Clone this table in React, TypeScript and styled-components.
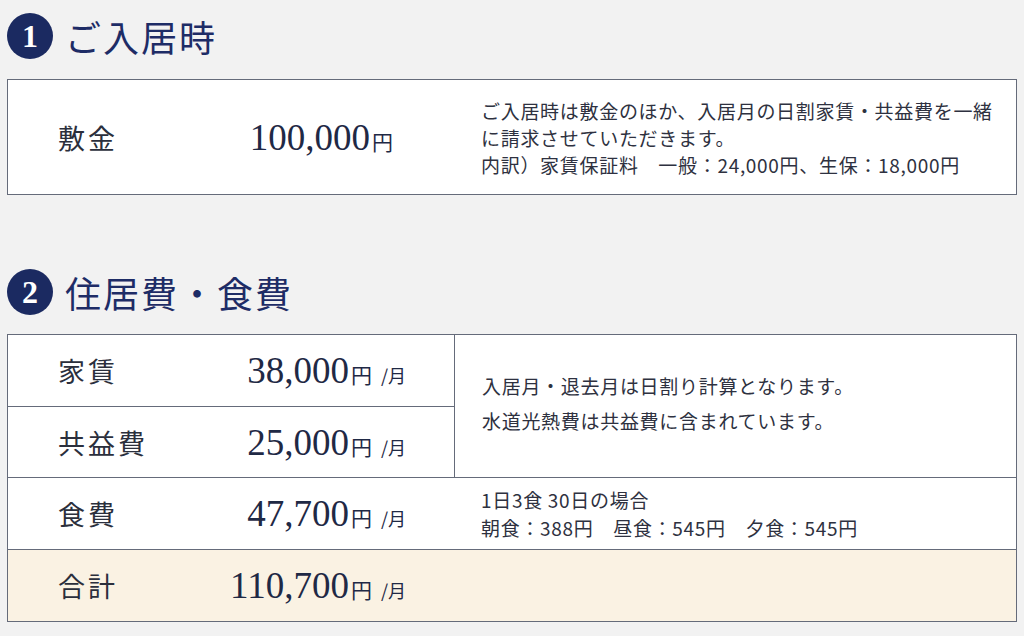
import React from 'react';
import styled, {createGlobalStyle} from 'styled-components';

const GlobalStyle = createGlobalStyle`
    html, body {
        margin: 0;
        padding: 0;
        background: #f2f2f2;
    }

    body {
        font-family: 'Noto Sans CJK JP', 'Noto Sans', sans-serif;
        color: #2e3140;
    }
`;

const Page = styled.div`
    padding: 13px 7px 0 7px;
    display: flex;
    flex-direction: column;
`;

const Heading = styled.h2<{$top: number}>`
    margin: ${({$top}) => $top}px 0 0 0;
    display: flex;
    align-items: center;
    gap: 12px;
    height: 46px;
    font-size: 36px;
    font-weight: 400;
    letter-spacing: 2px;
    color: #1e2c66;
    line-height: 1;
`;

const Badge = styled.span`
    width: 46px;
    height: 46px;
    border-radius: 50%;
    background: #1b2a61;
    color: #ffffff;
    display: flex;
    align-items: center;
    justify-content: center;
    font-family: 'Liberation Serif', serif;
    font-weight: 700;
    font-size: 32px;
    letter-spacing: 0;
    flex-shrink: 0;
`;

const Table = styled.div<{$top: number}>`
    margin-top: ${({$top}) => $top}px;
    border: 1px solid #656b7a;
    background: #ffffff;
    display: flex;
    flex-direction: column;
`;

const Row = styled.div<{$total?: boolean; $divided?: boolean; $height?: number}>`
    display: flex;
    align-items: stretch;
    min-height: ${({$height}) => $height ?? 71}px;
    background: ${({$total}) => ($total ? '#faf2e3' : '#ffffff')};
    border-top: ${({$divided}) => ($divided ? '1px solid #656b7a' : 'none')};
`;

const LeftStack = styled.div`
    width: 446px;
    flex-shrink: 0;
    display: flex;
    flex-direction: column;
    border-right: 1px solid #656b7a;

    & > div + div {
        border-top: 1px solid #656b7a;
    }
`;

const ItemCell = styled.div<{$padRight?: number}>`
    width: 446px;
    box-sizing: border-box;
    flex-shrink: 0;
    min-height: 71px;
    display: flex;
    align-items: center;
    justify-content: space-between;
    padding: 0 ${({$padRight}) => $padRight ?? 48}px 0 50px;
`;

const Label = styled.span`
    font-size: 27px;
    letter-spacing: 3px;
    color: #2b2f3c;
`;

const Amount = styled.span`
    display: flex;
    align-items: baseline;
    color: #1f2945;
`;

const Num = styled.span`
    font-family: 'Liberation Serif', serif;
    font-size: 37px;
    letter-spacing: 0;
`;

const Yen = styled.span`
    font-size: 21px;
    margin-left: 2px;
`;

const Per = styled.span`
    font-size: 18px;
    margin-left: 9px;
`;

const Desc = styled.div<{$lh?: number; $pad?: number; $shift?: number}>`
    flex: 1;
    display: flex;
    flex-direction: column;
    justify-content: center;
    padding: ${({$pad}) => $pad ?? 0}px 20px ${({$pad, $shift}) => ($pad ?? 0) + ($shift ?? 0)}px 27px;
    font-size: 19px;
    letter-spacing: 0.7px;
    line-height: ${({$lh}) => $lh ?? 27}px;
    color: #2e3140;

    p {
        margin: 0;
    }
`;

const Item = ({label, num, per = true, padRight}: {label: string; num: string; per?: boolean; padRight?: number}) => (
    <ItemCell $padRight={padRight}>
        <Label>{label}</Label>
        <Amount>
            <Num>{num}</Num>
            <Yen>円</Yen>
            {per && <Per>/月</Per>}
        </Amount>
    </ItemCell>
);

export default function App() {
    return (
        <Page>
            <GlobalStyle />
            <Heading $top={0}>
                <Badge>1</Badge>
                ご入居時
            </Heading>
            <Table $top={20}>
                <Row $height={114}>
                    <Item label="敷金" num="100,000" per={false} padRight={61} />
                    <Desc $pad={16}>
                        <p>ご入居時は敷金のほか、入居月の日割家賃・共益費を一緒</p>
                        <p>に請求させていただきます。</p>
                        <p>内訳）家賃保証料　一般：24,000円、生保：18,000円</p>
                    </Desc>
                </Row>
            </Table>

            <Heading $top={74}>
                <Badge>2</Badge>
                住居費・食費
            </Heading>
            <Table $top={19}>
                <Row $height={72}>
                    <LeftStack>
                        <Item label="家賃" num="38,000" />
                        <Item label="共益費" num="25,000" />
                    </LeftStack>
                    <Desc $lh={35} $shift={6}>
                        <p>入居月・退去月は日割り計算となります。</p>
                        <p>水道光熱費は共益費に含まれています。</p>
                    </Desc>
                </Row>
                <Row $divided>
                    <Item label="食費" num="47,700" />
                    <Desc $lh={28}>
                        <p>1日3食 30日の場合</p>
                        <p>朝食：388円　昼食：545円　夕食：545円</p>
                    </Desc>
                </Row>
                <Row $divided $total>
                    <Item label="合計" num="110,700" />
                    <Desc />
                </Row>
            </Table>
        </Page>
    );
}
